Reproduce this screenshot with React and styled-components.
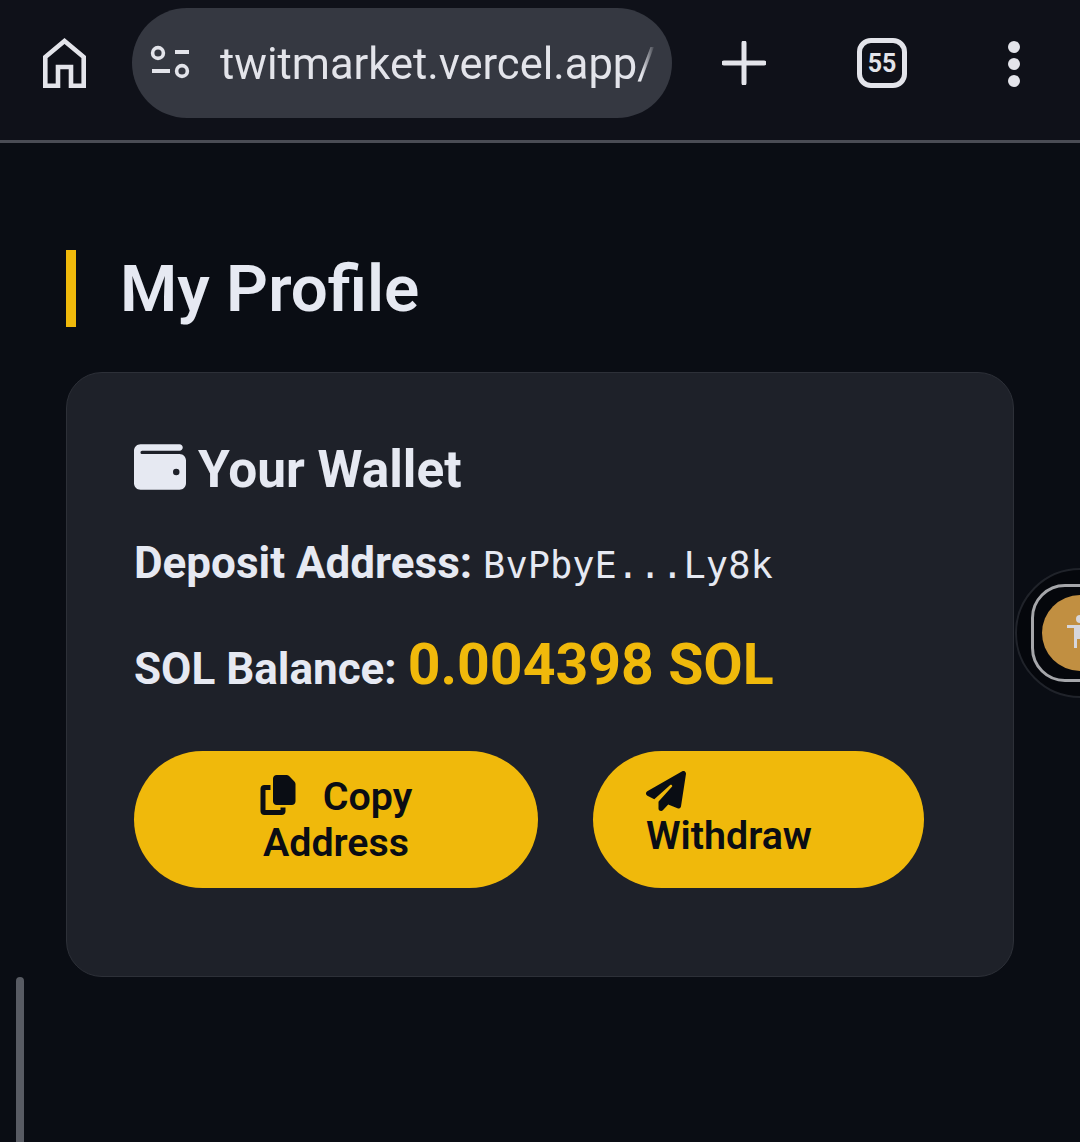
import React from "react";
import styled, { createGlobalStyle } from "styled-components";
import { FaCopy, FaPaperPlane, FaWallet } from "react-icons/fa6";

const GlobalStyle = createGlobalStyle`
  html, body {
    margin: 0;
    padding: 0;
    height: 100%;
    background: #0a0d14;
    font-family: Roboto, "Liberation Sans", sans-serif;
  }
  * { box-sizing: border-box; }
`;

const App = () => {
  return (
    <>
      <GlobalStyle />
      <Screen>
        <Toolbar>
          <HomeIcon viewBox="0 0 43 50" aria-hidden="true">
            <path
              d="M2.3 47.7V19L21.5 3l19.2 16v28.7H28V29H15v18.7z"
              fill="none"
              stroke="#e3e4ea"
              strokeWidth="4.6"
            />
          </HomeIcon>
          <UrlPill>
            <TuneIcon viewBox="0 0 42 36" aria-hidden="true">
              <circle cx="8" cy="8" r="5.4" fill="none" stroke="#e3e4ea" strokeWidth="3.6" />
              <circle cx="32" cy="26" r="5.4" fill="none" stroke="#e3e4ea" strokeWidth="3.6" />
              <path d="M25 7h14M2 26h18" stroke="#e3e4ea" strokeWidth="3.8" />
            </TuneIcon>
            <UrlText>twitmarket.vercel.app/</UrlText>
          </UrlPill>
          <PlusIcon viewBox="0 0 44 44" aria-hidden="true">
            <path d="M22 2v40M2 22h40" stroke="#e3e4ea" strokeWidth="5" strokeLinecap="round" />
          </PlusIcon>
          <TabCount>55</TabCount>
          <MenuDots>
            <Dot />
            <Dot />
            <Dot />
          </MenuDots>
        </Toolbar>

        <Page>
          <Heading>My Profile</Heading>
          <Card>
            <CardTitle>
              <FaWallet />
              Your Wallet
            </CardTitle>
            <AddressRow>
              <strong>Deposit Address:</strong> <Mono>BvPbyE...Ly8k</Mono>
            </AddressRow>
            <BalanceRow>
              <strong>SOL Balance:</strong> <Balance>0.004398 SOL</Balance>
            </BalanceRow>
            <Actions>
              <Button $width={404} $align="center">
                <Line>
                  <FaCopy />
                  <span>Copy</span>
                </Line>
                <span>Address</span>
              </Button>
              <WithdrawButton $width={331} $align="flex-start">
                <FaPaperPlane />
                <span>Withdraw</span>
              </WithdrawButton>
            </Actions>
          </Card>
        </Page>

        <ScrollThumb />
        <FloatingWidget>
          <WidgetFrame>
            <WidgetBadge>
              <PersonIcon viewBox="0 0 26 36" aria-hidden="true">
                <circle cx="13" cy="4" r="4" fill="#d6d6dc" />
                <path d="M0 10h26v3h-7v20h-3v-9h-6v9H7V13H0z" fill="#d6d6dc" />
              </PersonIcon>
            </WidgetBadge>
          </WidgetFrame>
        </FloatingWidget>
      </Screen>
    </>
  );
};

const Screen = styled.div`
  position: relative;
  width: 1080px;
  height: 1142px;
  overflow: hidden;
  background: #0a0d14;
`;

const Toolbar = styled.header`
  display: flex;
  align-items: flex-start;
  width: 100%;
  height: 143px;
  padding: 8px 0 0 43px;
  background: #0f1119;
  border-bottom: 3px solid #4a4c55;
`;

const HomeIcon = styled.svg`
  width: 43px;
  height: 50px;
  margin-top: 30px;
  flex-shrink: 0;
`;

const UrlPill = styled.div`
  display: flex;
  align-items: center;
  width: 540px;
  height: 110px;
  margin-left: 46px;
  padding: 0 20px 0 18px;
  border-radius: 55px;
  background: #353841;
  flex-shrink: 0;
`;

const TuneIcon = styled.svg`
  width: 42px;
  height: 36px;
  margin-right: 28px;
  flex-shrink: 0;
`;

const UrlText = styled.div`
  flex: 1;
  margin-top: 3px;
  white-space: nowrap;
  font-size: 43.5px;
  line-height: 50px;
  color: #e3e4ea;
  mask-image: linear-gradient(to right, #000 97%, transparent 100%);
`;

const PlusIcon = styled.svg`
  width: 44px;
  height: 44px;
  margin: 33px 0 0 50px;
  flex-shrink: 0;
`;

const TabCount = styled.div`
  display: flex;
  align-items: center;
  justify-content: center;
  width: 50px;
  height: 50px;
  margin: 30px 0 0 91px;
  border: 5px solid #e3e4ea;
  border-radius: 14px;
  font-size: 25px;
  font-weight: 700;
  color: #e3e4ea;
  flex-shrink: 0;
`;

const MenuDots = styled.div`
  display: flex;
  flex-direction: column;
  gap: 5px;
  margin: 33px 0 0 101px;
`;

const Dot = styled.span`
  width: 12px;
  height: 12px;
  border-radius: 50%;
  background: #e3e4ea;
`;

const Page = styled.main`
  padding: 107px 66px 0;
`;

const Heading = styled.h1`
  display: flex;
  align-items: center;
  height: 77px;
  margin: 0 0 45px;
  padding-left: 44px;
  border-left: 10px solid #f0b90b;
  font-size: 65.5px;
  font-weight: 600;
  color: #e6e9f2;
`;

const Card = styled.section`
  width: 948px;
  height: 605px;
  padding: 68px 67px;
  background: #1e2129;
  border: 1px solid #2d3038;
  border-radius: 36px;
`;

const CardTitle = styled.h2`
  display: flex;
  align-items: center;
  gap: 12px;
  height: 56px;
  margin: 0 0 41px;
  font-size: 51.4px;
  font-weight: 700;
  color: #e6e9f2;

  svg {
    width: 52px;
    height: 52px;
    margin-top: -4px;
  }
`;

const AddressRow = styled.p`
  height: 50px;
  margin: 0 0 48px;
  font-size: 44px;
  line-height: 50px;
  color: #e6e9f2;

  strong {
    font-weight: 700;
  }
`;

const Mono = styled.code`
  font-family: "DejaVu Sans Mono", "Liberation Mono", monospace;
  font-size: 37px;
  color: #e6e9f2;
`;

const BalanceRow = styled.p`
  height: 58px;
  margin: 0 0 57px;
  font-size: 44px;
  line-height: 58px;
  color: #e6e9f2;

  strong {
    font-weight: 700;
  }
`;

const Balance = styled.span`
  font-size: 57.2px;
  font-weight: 700;
  color: #f0b90b;
`;

const Actions = styled.div`
  display: flex;
  gap: 55px;
`;

const Button = styled.button`
  display: flex;
  flex-direction: column;
  align-items: ${(p) => p.$align};
  justify-content: center;
  width: ${(p) => p.$width}px;
  height: 137px;
  padding: 0 53px;
  border: none;
  border-radius: 69px;
  background: #f0b90b;
  color: #0a0d14;
  font-family: inherit;
  font-size: 39.4px;
  font-weight: 600;
  line-height: 46px;

  svg {
    width: 40px;
    height: 40px;
    flex-shrink: 0;
  }
`;

const WithdrawButton = styled(Button)`
  padding-bottom: 10px;

  svg {
    margin-bottom: 2px;
  }
`;

const Line = styled.span`
  display: flex;
  align-items: center;
  gap: 25px;

  svg {
    margin: -4px 0 0 -2px;
  }
`;

const ScrollThumb = styled.div`
  position: absolute;
  left: 16px;
  top: 977px;
  width: 8px;
  height: 180px;
  border-radius: 4px;
  background: #585b63;
`;

const FloatingWidget = styled.aside`
  position: absolute;
  left: 1015px;
  top: 568px;
  width: 130px;
  height: 130px;
  padding: 14px;
  border: 2px solid #20232a;
  border-radius: 50%;
  background: #05070c;
`;

const WidgetFrame = styled.div`
  width: 98px;
  height: 98px;
  padding: 8px;
  border: 3px solid #a5a6aa;
  border-radius: 34px;
  background: #05070c;
`;

const WidgetBadge = styled.div`
  display: flex;
  align-items: center;
  justify-content: center;
  width: 76px;
  height: 76px;
  border-radius: 50%;
  background: #c18f41;
`;

const PersonIcon = styled.svg`
  width: 26px;
  height: 36px;
`;

export default App;
